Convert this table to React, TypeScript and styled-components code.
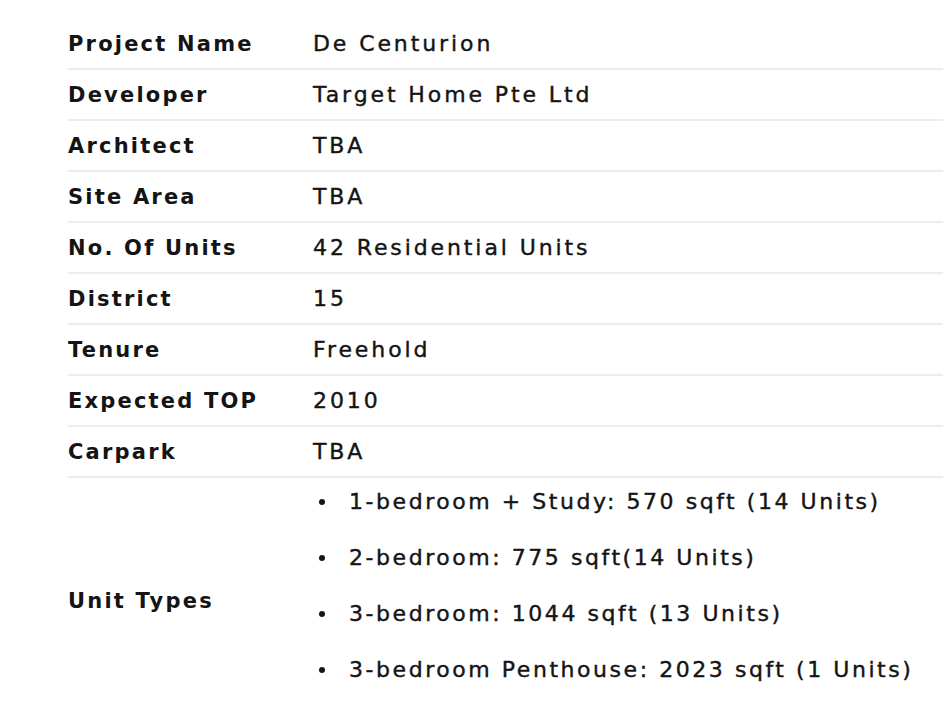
import React from 'react';
import styled, { createGlobalStyle } from 'styled-components';

const projectDetails: { label: string; value: string }[] = [
    { label: 'Project Name', value: 'De Centurion' },
    { label: 'Developer', value: 'Target Home Pte Ltd' },
    { label: 'Architect', value: 'TBA' },
    { label: 'Site Area', value: 'TBA' },
    { label: 'No. Of Units', value: '42 Residential Units' },
    { label: 'District', value: '15' },
    { label: 'Tenure', value: 'Freehold' },
    { label: 'Expected TOP', value: '2010' },
    { label: 'Carpark', value: 'TBA' },
];

const unitTypes = [
    '1-bedroom + Study: 570 sqft (14 Units)',
    '2-bedroom: 775 sqft(14 Units)',
    '3-bedroom: 1044 sqft (13 Units)',
    '3-bedroom Penthouse: 2023 sqft (1 Units)',
];

export default function App() {
    return (
        <>
            <GlobalStyle />
            <Page>
                <Table>
                    {projectDetails.map(detail => (
                        <Row key={detail.label}>
                            <Label>{detail.label}</Label>
                            <Value>{detail.value}</Value>
                        </Row>
                    ))}
                    <Row>
                        <Label>Unit Types</Label>
                        <UnitList>
                            {unitTypes.map(unit => (
                                <UnitItem key={unit}>
                                    <Bullet />
                                    {unit}
                                </UnitItem>
                            ))}
                        </UnitList>
                    </Row>
                </Table>
            </Page>
        </>
    );
}

const GlobalStyle = createGlobalStyle`
    html, body {
        margin: 0;
        background: #ffffff;
        overflow: hidden;
    }
    body {
        font-family: "DejaVu Sans", "Liberation Sans", sans-serif;
        color: #141414;
    }
`;

const Page = styled.div`
    padding: 19px 0 0 68px;
`;

const Table = styled.div`
    display: flex;
    flex-direction: column;
`;

const Row = styled.div`
    display: grid;
    grid-template-columns: 245px 1fr;
    align-items: center;
    min-height: 49px;
    border-bottom: 2px solid #ededed;
`;

const Label = styled.div`
    font-size: 21px;
    font-weight: 700;
    letter-spacing: 2.2px;
    line-height: 26px;
`;

const Value = styled.div`
    font-size: 22px;
    font-weight: 400;
    letter-spacing: 2.9px;
    line-height: 26px;
    -webkit-text-stroke: 0.4px #141414;
`;

const UnitList = styled.ul`
    margin: 0;
    padding: 11px 0 40px 6px;
    list-style: none;
    display: flex;
    flex-direction: column;
    gap: 30px;
`;

const UnitItem = styled.li`
    display: flex;
    align-items: center;
    font-size: 22px;
    font-weight: 400;
    letter-spacing: 2.55px;
    line-height: 26px;
    -webkit-text-stroke: 0.4px #141414;
`;

const Bullet = styled.span`
    width: 6px;
    height: 6px;
    border-radius: 50%;
    background: #141414;
    margin-right: 24px;
    flex-shrink: 0;
`;
